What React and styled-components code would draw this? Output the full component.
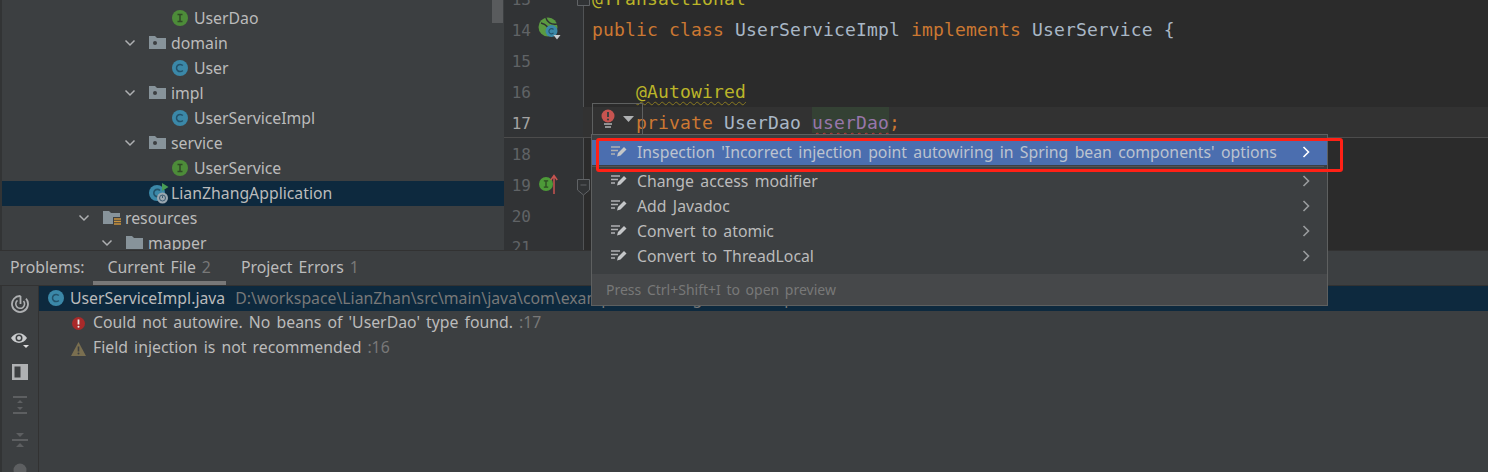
import React from "react";
import styled, { createGlobalStyle } from "styled-components";

const GlobalStyle = createGlobalStyle`
  html, body {
    margin: 0;
    padding: 0;
    background: #3c3f41;
    overflow: hidden;
  }
`;

const uiFont = `"Noto Sans", "Open Sans", sans-serif`;
const codeFont = `"DejaVu Sans Mono", "Liberation Mono", monospace`;

const Window = styled.div`
  position: relative;
  width: 1488px;
  height: 472px;
  overflow: hidden;
  background: #3c3f41;
  color: #bbbbbb;
  font-family: ${uiFont};
  font-size: 15.8px;
  word-spacing: 2px;
`;

const TopArea = styled.div`
  display: flex;
  height: 250px;
  overflow: hidden;
  border-bottom: 1px solid #323232;
`;

/* project tree */
const Tree = styled.div`
  position: relative;
  flex: 0 0 502px;
  padding-top: 6px;
  border-left: 2px solid #323435;
  overflow: hidden;
`;

const TreeThumb = styled.div`
  position: absolute;
  top: 0;
  right: 1px;
  width: 11px;
  height: 23px;
  background: #595b5d;
`;

const TreeRow = styled.div`
  display: flex;
  align-items: center;
  height: 25px;
  box-sizing: border-box;
  padding-left: ${(p) => 74 + p.$depth * 23}px;
  padding-bottom: 2px;
  background: ${(p) => (p.$selected ? "#0d293e" : "transparent")};
  white-space: nowrap;
`;

const ChevronSlot = styled.span`
  display: flex;
  flex: 0 0 16px;
  justify-content: center;
  margin-right: 11px;
`;

const IconSlot = styled.span`
  display: flex;
  flex: 0 0 16px;
  margin-right: 6px;
`;

const FolderSvg = styled.svg`
  flex: 0 0 18px;
  margin-right: -2px;
`;

const AppSvg = styled.svg`
  flex: 0 0 20px;
  margin-right: -4px;
`;

/* editor */
const Editor = styled.div`
  flex: 1;
  margin-top: -17px;
  background: linear-gradient(90deg, #313335 79px, #515355 79px, #515355 80px, #2b2b2b 80px);
`;

const Line = styled.div`
  display: flex;
  height: 31px;
  line-height: 31px;
  box-sizing: border-box;
  background: ${(p) => (p.$current ? "linear-gradient(90deg, transparent 79px, #323232 79px)" : "transparent")};
  border-bottom: 1px solid ${(p) => (p.$current ? "#4c4c4c" : "transparent")};
`;

const LineNo = styled.span`
  flex: 0 0 27px;
  text-align: right;
  font-family: ${codeFont};
  font-size: 16px;
  line-height: 33px;
  color: ${(p) => (p.$current ? "#a4a3a3" : "#606366")};
`;

const GutterMark = styled.span`
  display: flex;
  flex: 0 0 61px;
  align-items: center;
  padding-left: 7px;
  box-sizing: border-box;
`;

const Code = styled.code`
  font-family: ${codeFont};
  font-size: 18px;
  letter-spacing: 0.16px;
  word-spacing: 0;
  white-space: pre;
  color: #a9b7c6;
`;

const Keyword = styled.span`
  color: #cc7832;
`;

const Annotation = styled.span`
  color: #bbb529;
  text-decoration: ${(p) => (p.$warn ? "underline wavy #8a7a20 1px" : "none")};
  text-underline-offset: 3px;
`;

const FieldName = styled.span`
  color: #9876aa;
  display: inline-block;
  height: 26px;
  line-height: 31px;
  vertical-align: top;
  background: #344134;
  text-decoration: underline wavy #bc3f3c 1px;
  text-underline-offset: 3px;
`;

const ImplArrow = styled.svg`
  margin-left: -3px;
`;

const ImplBadge = styled.svg`
  margin-left: 1px;
`;

const FoldMark = styled.svg`
  position: absolute;
  left: 577px;
  top: ${(p) => p.$top}px;
`;

const BulbBox = styled.div`
  position: absolute;
  left: 592px;
  top: 103px;
  width: 51px;
  height: 31px;
  display: flex;
  align-items: center;
  gap: 8px;
  padding-left: 8px;
  box-sizing: border-box;
  border: 1px solid #5e6060;
  border-bottom: none;
`;

/* intention popup */
const Popup = styled.div`
  position: absolute;
  left: 591px;
  top: 134px;
  width: 737px;
  height: 172px;
  box-sizing: border-box;
  display: flex;
  flex-direction: column;
  padding-top: 5px;
  background: #3c3f41;
  border: 1px solid #5e6060;
`;

const MenuItem = styled.div`
  display: flex;
  align-items: center;
  flex: 0 0 25px;
  box-sizing: border-box;
  padding-left: 19px;
  padding-bottom: 2px;
  background: ${(p) => (p.$active ? "#4b6eaf" : "transparent")};
  color: ${(p) => (p.$active ? "#bcc3cf" : "#bbbbbb")};
  white-space: nowrap;
`;

const MenuIcon = styled.svg`
  flex: 0 0 16px;
  margin-right: 10px;
`;

const MenuLabel = styled.span`
  flex: 1;
  word-spacing: 2.2px;
`;

const MenuArrow = styled.svg`
  flex: 0 0 8px;
  margin-right: 17px;
`;

const MenuDivider = styled.div`
  flex: 0 0 4px;
  margin-right: 3px;
  box-sizing: border-box;
  border-top: 1px solid transparent;
  border-bottom: 2px solid transparent;
  background: linear-gradient(#515355, #515355) no-repeat 0 0 / 100% 1px;
`;

const MenuFooter = styled.div`
  margin-top: 5px;
  flex: 1;
  display: flex;
  align-items: center;
  padding-left: 14px;
  background: #46484a;
  color: #787878;
  font-size: 14px;
`;

const Callout = styled.div`
  position: absolute;
  left: 596px;
  top: 138px;
  width: 747px;
  height: 34px;
  box-sizing: border-box;
  border: 3px solid #ff2116;
  border-radius: 3px;
`;

/* problems tool window */
const TabBar = styled.div`
  display: flex;
  align-items: stretch;
  height: 34px;
  padding-left: 10px;
  border-bottom: 1px solid #323232;
`;

const TabTitle = styled.span`
  display: flex;
  align-items: center;
  margin-right: 8px;
  padding-bottom: 3px;
`;

const Tab = styled.span`
  display: flex;
  align-items: center;
  gap: 6px;
  padding: 2px 15px 0;
  box-sizing: border-box;
  border-bottom: 4px solid ${(p) => (p.$active ? "#787878" : "transparent")};
`;

const TabCount = styled.span`
  color: #787878;
`;

const ProblemsBody = styled.div`
  display: flex;
  height: 187px;
`;

const SideBar = styled.div`
  flex: 0 0 36px;
  display: flex;
  flex-direction: column;
  align-items: center;
  padding-top: 9px;
  border-left: 2px solid #323435;
  border-right: 1px solid #323232;
`;

const SideIcon = styled.svg`
  flex: none;
  margin-top: ${(p) => p.$gap}px;
`;

const ProblemList = styled.div`
  flex: 1;
`;

const FileRow = styled.div`
  display: flex;
  align-items: center;
  height: 25px;
  box-sizing: border-box;
  padding-left: 9px;
  padding-bottom: 1px;
  gap: 6px;
  background: #0d293e;
  white-space: nowrap;
`;

const FilePath = styled.span`
  margin-left: 4px;
  color: #787878;
`;

const ProblemRow = styled.div`
  display: flex;
  align-items: center;
  height: 25px;
  box-sizing: border-box;
  padding-left: 33px;
  padding-bottom: 3px;
  gap: 6px;
  white-space: nowrap;
`;

const ProblemLine = styled.span`
  color: #787878;
`;

const ErrorSvg = styled.svg`
  margin-right: 2px;
  margin-top: 3px;
`;

const WarnSvg = styled.svg`
  margin-left: -1px;
  margin-right: 1px;
  margin-top: 3px;
`;

const Chevron = () => (
  <svg width="12" height="8" viewBox="0 0 12 8">
    <path d="M1.5 1.5 L6 6 L10.5 1.5" fill="none" stroke="#aeb0b2" strokeWidth="1.5" />
  </svg>
);

const BadgeIcon = ({ kind }) => {
  const green = kind === "i";
  return (
    <svg width="16" height="16" viewBox="0 0 16 16">
      <circle cx="8" cy="8" r="8" fill={green ? "#4d8c39" : "#3b88a8"} />
      {green ? (
        <path d="M5.5 4.5h5M5.5 11.5h5M8 4.5v7" stroke="#2f4a25" strokeWidth="1.5" fill="none" />
      ) : (
        <path d="M10.8 5.6a3.6 3.6 0 1 0 0 4.8" stroke="#23526a" strokeWidth="1.5" fill="none" />
      )}
    </svg>
  );
};

const Folder = ({ dot, res }) => (
  <FolderSvg width="18" height="17" viewBox="0 0 18 17">
    <path d="M0 2h6l2 2h9v11H0z" fill="#87939a" />
    {dot && <circle cx="6" cy="9" r="2" fill="#3c3f41" />}
    {res && (
      <g>
        <rect x="10" y="8" width="8" height="9" fill="#3c3f41" />
        <path d="M11 10h7M11 12.5h7M11 15h7" stroke="#c9933d" strokeWidth="1.6" />
      </g>
    )}
  </FolderSvg>
);

const AppIcon = () => (
  <AppSvg width="20" height="24" viewBox="0 0 20 24">
    <circle cx="8" cy="12" r="8" fill="#3b88a8" />
    <path d="M11 9.500a3.600 3.600 0 1 0 0 5" stroke="#23526a" strokeWidth="1.600" fill="none" />
    <path d="M13 2l6.500 4-6.500 4z" fill="#499c54" />
    <circle cx="13.500" cy="17" r="5.500" fill="#9aa7b0" />
    <circle cx="13.500" cy="17" r="3" fill="none" stroke="#3c5a70" strokeWidth="1" />
    <path d="M13.500 14.500v2.500" stroke="#3c5a70" strokeWidth="1" />
  </AppSvg>
);

const BeanMark = () => (
  <svg width="24" height="24" viewBox="0 0 24 24">
    <circle cx="10" cy="10" r="9.500" fill="#5b9a41" />
    <path d="M3 6c4 1 8 3 10 11M8 1c1 4 5 7 11 6" stroke="#2f3133" strokeWidth="1.400" fill="none" />
    <circle cx="13.500" cy="14" r="6" fill="#3b88a8" />
    <path d="M15.500 12.500a2.600 2.600 0 1 0 0 3.400" stroke="#23526a" strokeWidth="1.200" fill="none" />
    <path d="M15.500 18h7l-3.500 4.500z" fill="#c8ccd0" />
  </svg>
);

const ImplMark = () => (
  <>
    <ImplBadge width="14" height="14" viewBox="0 0 16 16">
      <circle cx="8" cy="8" r="8" fill="#4d9a38" />
      <path d="M5.500 4.500h5M5.500 11.500h5M8 4.500v7" stroke="#2c4a22" strokeWidth="1.500" fill="none" />
    </ImplBadge>
    <ImplArrow width="8" height="20" viewBox="0 0 8 20">
      <path d="M4 20V2M0.800 6L4 1.500 7.200 6" stroke="#c75450" strokeWidth="1.500" fill="none" />
    </ImplArrow>
  </>
);

const EditIcon = () => (
  <MenuIcon width="16" height="13" viewBox="0 0 16 13">
    <path d="M0 2h9M0 5.500h7M0 9h4" stroke="#aeb0b2" strokeWidth="1.600" />
    <path d="M6 11.500l1-3.500L13 2l2.500 2.500-6 6z" fill="#c4c6c8" />
  </MenuIcon>
);

const ArrowIcon = ({ active }) => (
  <MenuArrow width="8" height="12" viewBox="0 0 8 12">
    <path d="M1.500 1 L6.500 6 L1.500 11" fill="none" stroke={active ? "#ffffff" : "#9a9c9e"} strokeWidth="1.600" />
  </MenuArrow>
);

const RedBulb = () => (
  <svg width="14" height="20" viewBox="0 0 14 20">
    <circle cx="7" cy="7" r="6.500" fill="#c75450" />
    <path d="M7 3v5" stroke="#3c3f41" strokeWidth="2" />
    <circle cx="7" cy="10.500" r="1.100" fill="#3c3f41" />
    <path d="M3 15h8M4 18h6" stroke="#b0b2b4" strokeWidth="1.600" />
  </svg>
);

const DownTriangle = () => (
  <svg width="11" height="6" viewBox="0 0 11 6">
    <path d="M0 0h11L5.500 6z" fill="#afb1b3" />
  </svg>
);

const ErrorIcon = () => (
  <ErrorSvg width="13" height="13" viewBox="0 0 13 13">
    <circle cx="6.500" cy="6.500" r="6.500" fill="#a92a2a" />
    <path d="M6.500 2.500v5" stroke="#eeeeee" strokeWidth="1.800" />
    <circle cx="6.500" cy="9.800" r="1" fill="#eeeeee" />
  </ErrorSvg>
);

const WarnIcon = () => (
  <WarnSvg width="15" height="14" viewBox="0 0 15 14">
    <path d="M7.500 0L15 14H0z" fill="#7a6f50" />
    <path d="M7.500 4.500v5" stroke="#3c3f41" strokeWidth="1.600" />
    <circle cx="7.500" cy="11.500" r="1" fill="#3c3f41" />
  </WarnSvg>
);

const SideIcons = () => (
  <>
    <SideIcon $gap={0} width="18" height="18" viewBox="0 0 18 18">
      <path d="M15 3.700A8 8 0 1 1 9.500 1" fill="none" stroke="#aeb0b2" strokeWidth="1.800" />
      <path d="M12.500 6A4.400 4.400 0 1 1 6.500 5.400" fill="none" stroke="#aeb0b2" strokeWidth="1.600" />
      <path d="M9.500 1v8" stroke="#aeb0b2" strokeWidth="1.800" />
    </SideIcon>
    <SideIcon $gap={18} width="20" height="18" viewBox="0 0 20 18">
      <path d="M1 7c4-6.500 12-6.500 16 0-4 6.500-12 6.500-16 0z" fill="#c9cbcd" />
      <circle cx="9" cy="7" r="3.500" fill="#3c3f41" />
      <circle cx="9" cy="7" r="2" fill="#c9cbcd" />
      <path d="M13 14h6l-3 3z" fill="#dddddd" />
    </SideIcon>
    <SideIcon $gap={15} width="16" height="16" viewBox="0 0 16 16">
      <rect width="16" height="16" fill="#afb1b3" />
      <rect x="2.500" y="2.500" width="6" height="11" fill="#3c3f41" />
    </SideIcon>
    <SideIcon $gap={16} width="16" height="18" viewBox="0 0 16 18">
      <path d="M1 1h14M1 17h14" stroke="#5d5f61" strokeWidth="2" />
      <path d="M5 7l3-3 3 3zM5 11l3 3 3-3z" fill="#5d5f61" />
    </SideIcon>
    <SideIcon $gap={18} width="16" height="16" viewBox="0 0 16 16">
      <path d="M0 8h16" stroke="#5d5f61" strokeWidth="2" />
      <path d="M4 1h8L8 5zM4 15h8L8 11z" fill="#5d5f61" />
    </SideIcon>
    <SideIcon $gap={15} width="14" height="14" viewBox="0 0 14 14">
      <circle cx="7" cy="7" r="6.500" fill="#5d5f61" />
    </SideIcon>
  </>
);

const treeRows = [
  { label: "UserDao", depth: 3, icon: <BadgeIcon kind="i" /> },
  { label: "domain", depth: 2, open: true, icon: <Folder dot /> },
  { label: "User", depth: 3, icon: <BadgeIcon kind="c" /> },
  { label: "impl", depth: 2, open: true, icon: <Folder dot /> },
  { label: "UserServiceImpl", depth: 3, icon: <BadgeIcon kind="c" /> },
  { label: "service", depth: 2, open: true, icon: <Folder dot /> },
  { label: "UserService", depth: 3, icon: <BadgeIcon kind="i" /> },
  { label: "LianZhangApplication", depth: 2, selected: true, icon: <AppIcon /> },
  { label: "resources", depth: 0, open: true, icon: <Folder res /> },
  { label: "mapper", depth: 1, open: true, icon: <Folder /> },
];

const menuItems = [
  "Change access modifier",
  "Add Javadoc",
  "Convert to atomic",
  "Convert to ThreadLocal",
];

export default function App() {
  return (
    <Window>
      <GlobalStyle />
      <TopArea>
        <Tree>
          {treeRows.map((row) => (
            <TreeRow key={row.label} $depth={row.depth} $selected={row.selected}>
              <ChevronSlot>{row.open && <Chevron />}</ChevronSlot>
              <IconSlot>{row.icon}</IconSlot>
              {row.label}
            </TreeRow>
          ))}
          <TreeThumb />
        </Tree>
        <Editor>
          <Line>
            <LineNo>13</LineNo>
            <GutterMark />
            <Code>
              <Annotation>@Transactional</Annotation>
            </Code>
          </Line>
          <Line>
            <LineNo>14</LineNo>
            <GutterMark>
              <BeanMark />
            </GutterMark>
            <Code>
              <Keyword>public class </Keyword>UserServiceImpl <Keyword>implements </Keyword>UserService {"{"}
            </Code>
          </Line>
          <Line>
            <LineNo>15</LineNo>
            <GutterMark />
          </Line>
          <Line>
            <LineNo>16</LineNo>
            <GutterMark />
            <Code>
              {"    "}
              <Annotation $warn>@Autowired</Annotation>
            </Code>
          </Line>
          <Line $current>
            <LineNo $current>17</LineNo>
            <GutterMark />
            <Code>
              {"    "}
              <Keyword>private </Keyword>UserDao <FieldName>userDao</FieldName>
              <Keyword>;</Keyword>
            </Code>
          </Line>
          <Line>
            <LineNo>18</LineNo>
            <GutterMark />
          </Line>
          <Line>
            <LineNo>19</LineNo>
            <GutterMark>
              <ImplMark />
            </GutterMark>
          </Line>
          <Line>
            <LineNo>20</LineNo>
            <GutterMark />
          </Line>
          <Line>
            <LineNo>21</LineNo>
            <GutterMark />
          </Line>
        </Editor>
      </TopArea>

      <TabBar>
        <TabTitle>Problems:</TabTitle>
        <Tab $active>
          Current File <TabCount>2</TabCount>
        </Tab>
        <Tab>
          Project Errors <TabCount>1</TabCount>
        </Tab>
      </TabBar>
      <ProblemsBody>
        <SideBar>
          <SideIcons />
        </SideBar>
        <ProblemList>
          <FileRow>
            <BadgeIcon kind="c" />
            UserServiceImpl.java
            <FilePath>D:\workspace\LianZhan\src\main\java\com\example\lianzhang\service\impl</FilePath>
          </FileRow>
          <ProblemRow>
            <ErrorIcon />
            Could not autowire. No beans of 'UserDao' type found.
            <ProblemLine>:17</ProblemLine>
          </ProblemRow>
          <ProblemRow>
            <WarnIcon />
            Field injection is not recommended
            <ProblemLine>:16</ProblemLine>
          </ProblemRow>
        </ProblemList>
      </ProblemsBody>

      <FoldMark $top={0} width="13" height="6" viewBox="0 0 13 6">
        <path d="M0.500 0V5.500H12.500V0" fill="#313335" stroke="#606366" />
      </FoldMark>
      <FoldMark $top={179} width="13" height="17" viewBox="0 0 13 17">
        <path d="M0.500 0.500H12.500V11L6.500 16 0.500 11z M3.500 6H9.500" fill="#313335" stroke="#606366" />
      </FoldMark>
      <BulbBox>
        <RedBulb />
        <DownTriangle />
      </BulbBox>

      <Popup>
        <MenuItem $active>
          <EditIcon />
          <MenuLabel>Inspection 'Incorrect injection point autowiring in Spring bean components' options</MenuLabel>
          <ArrowIcon active />
        </MenuItem>
        <MenuDivider />
        {menuItems.map((item) => (
          <MenuItem key={item}>
            <EditIcon />
            <MenuLabel>{item}</MenuLabel>
            <ArrowIcon />
          </MenuItem>
        ))}
        <MenuFooter>Press Ctrl+Shift+I to open preview</MenuFooter>
      </Popup>
      <Callout />
    </Window>
  );
}
